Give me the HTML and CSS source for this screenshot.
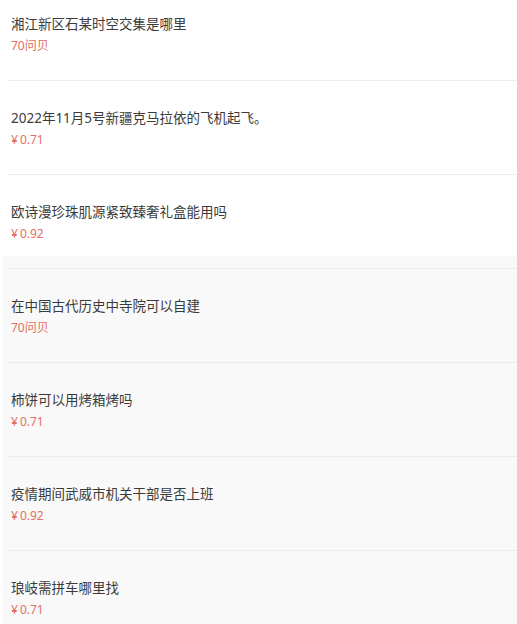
FILE: index.html
```html
<!DOCTYPE html>
<html lang="zh-CN">
<head>
<meta charset="utf-8">
<title>问答列表</title>
<link rel="stylesheet" href="styles.css">
</head>
<body>
<div class="list">
  <div class="item">
    <div class="q">
      <p class="title">湘江新区石某时空交集是哪里</p>
      <p class="price">70问贝</p>
    </div>
  </div>
  <div class="item">
    <div class="q">
      <p class="title">2022年11月5号新疆克马拉依的飞机起飞。</p>
      <p class="price"><span class="yen">¥</span>0.71</p>
    </div>
  </div>
  <div class="item">
    <div class="q">
      <p class="title">欧诗漫珍珠肌源紧致臻奢礼盒能用吗</p>
      <p class="price"><span class="yen">¥</span>0.92</p>
    </div>
  </div>
  <div class="item alt">
    <div class="q">
      <p class="title">在中国古代历史中寺院可以自建</p>
      <p class="price">70问贝</p>
    </div>
  </div>
  <div class="item alt">
    <div class="q">
      <p class="title">柿饼可以用烤箱烤吗</p>
      <p class="price"><span class="yen">¥</span>0.71</p>
    </div>
  </div>
  <div class="item alt">
    <div class="q">
      <p class="title">疫情期间武威市机关干部是否上班</p>
      <p class="price"><span class="yen">¥</span>0.92</p>
    </div>
  </div>
  <div class="item alt">
    <div class="q">
      <p class="title">琅岐需拼车哪里找</p>
      <p class="price"><span class="yen">¥</span>0.71</p>
    </div>
  </div>
</div>
</body>
</html>
```
FILE: styles.css
```css
html, body {
  margin: 0;
  padding: 0;
  background: #ffffff;
}

body {
  font-family: "Noto Sans", "Noto Sans CJK SC", sans-serif;
  color: #333333;
  overflow: hidden;
}

.list {
  display: flex;
  flex-direction: column;
}

.item {
  padding-top: 12px;
  background: #ffffff;
}

.item.alt {
  background: #f9f9f9;
  border-left: 2px solid #ffffff;
}

.q {
  margin-left: 8px;
  border-top: 1px solid #ececec;
  padding: 27px 0 10px 3px;
}

.item.alt .q {
  margin-left: 6px;
}

.item:first-child {
  padding-top: 0;
}

.item:first-child .q {
  border-top: 0;
  padding-top: 14px;
}

.title {
  margin: 0;
  font-size: 13.5px;
  line-height: 20px;
  color: #3b3b3b;
  white-space: nowrap;
}

.price {
  margin: 0;
  font-size: 12px;
  line-height: 24px;
  color: #e46e62;
}

.yen {
  margin-right: 2px;
}
```
